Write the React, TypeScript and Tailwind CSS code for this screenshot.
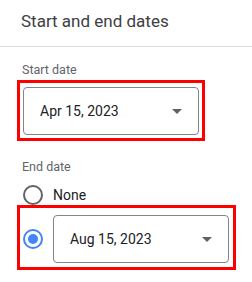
const font = { fontFamily: "Roboto, 'Liberation Sans', sans-serif" };

const Arrow = () => (
  <svg width="10" height="5" viewBox="0 0 10 5" className="shrink-0">
    <path d="M0 0h10L5 5z" fill="#5f6368" />
  </svg>
);

const DateSelect = ({ value }: { value: string }) => (
  <div className="h-[48px] w-[176px] shrink-0 rounded-[4px] border border-[#80868b] pl-4 pr-4 flex items-center justify-between">
    <span className="text-[14px] leading-5 text-[#202124]">{value}</span>
    <Arrow />
  </div>
);

const Radio = ({ checked }: { checked?: boolean }) => (
  <div
    className={
      checked
        ? "w-5 h-5 shrink-0 rounded-full border-2 border-[#4285f4] flex items-center justify-center"
        : "w-5 h-5 shrink-0 rounded-full border-2 border-[#5f6368]"
    }
  >
    {checked && <div className="w-[10px] h-[10px] rounded-full bg-[#4285f4]" />}
  </div>
);

export default function App() {
  return (
    <div className="w-[252px] h-[282px] bg-white overflow-hidden" style={font}>
      <div className="h-[47px] border-b border-[#dadce0] pt-[9px] pl-[21px]">
        <h2 className="text-[17px] leading-6 text-[#3c4043]">Start and end dates</h2>
      </div>

      <div className="pl-[17px]">
        <p className="mt-[15px] pl-[5px] text-[12.5px] leading-4 text-[#5f6368]">Start date</p>
        <div className="mt-[2px] w-[188px] h-[61px] border-[3px] border-[#ff0000] pl-[3px] pt-[4px]">
          <DateSelect value="Apr 15, 2023" />
        </div>

        <p className="mt-[18px] pl-[5px] text-[12.5px] leading-4 text-[#5f6368]">End date</p>
        <div className="mt-[10px] h-5 pl-[6px] flex items-center gap-[10px]">
          <Radio />
          <span className="text-[14px] leading-5 text-[#202124]">None</span>
        </div>
        <div className="w-[219px] h-[65px] border-[3px] border-[#ff0000] pl-[3px] pt-[7px] flex items-start gap-[10px]">
          <div className="h-[48px] flex items-center">
            <Radio checked />
          </div>
          <DateSelect value="Aug 15, 2023" />
        </div>
      </div>
    </div>
  );
}
